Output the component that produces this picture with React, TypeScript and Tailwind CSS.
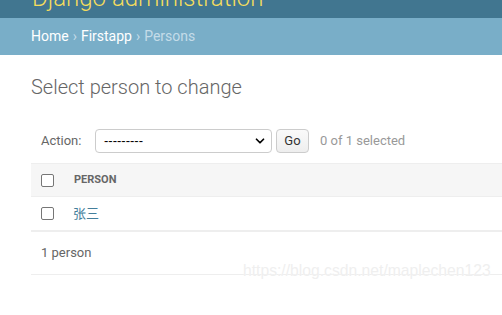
import { ChevronDown } from 'lucide-react';

export default function App() {
  return (
    <div className="relative w-[502px] h-[315px] overflow-hidden bg-white font-['Roboto',sans-serif] text-[#333]">
      <div className="h-[18px] bg-[#417690] overflow-hidden px-[32px]">
        <div className="mt-[-16px] text-[24px] font-light leading-[28px] text-[#f5dd5d]">Django administration</div>
      </div>
      <div className="h-[37px] bg-[#79aec8] flex items-center px-[31px] text-[14px] text-white">
        <span>Home</span>
        <span className="mx-[4px] text-[#c4dce8]">›</span>
        <span>Firstapp</span>
        <span className="mx-[4px] text-[#c4dce8]">›</span>
        <span className="text-[#c4dce8]">Persons</span>
      </div>

      <div className="px-[31px]">
        <h1 className="mt-[20px] text-[20px] font-light leading-[24px] text-[#666]">Select person to change</h1>

        <div className="mt-[30px] flex items-center h-[24px] text-[13px]">
          <span className="ml-[10px] w-[54px] text-[#666]">Action:</span>
          <div className="w-[177px] h-[24px] border border-[#ccc] rounded-[4px] bg-white flex items-center justify-between pl-[8px] pr-[4px]">
            <span className="text-black font-['Liberation_Sans',sans-serif]">---------</span>
            <ChevronDown className="w-[14px] h-[14px] text-black" strokeWidth={3} />
          </div>
          <div className="ml-[4px] w-[33px] h-[24px] border border-[#ccc] rounded-[4px] bg-gradient-to-b from-[#fafafa] to-[#eee] flex items-center justify-center text-[#333]">Go</div>
          <span className="ml-[11px] text-[#999]">0 of 1 selected</span>
        </div>

        <div className="mt-[10px] mr-[-31px]">
          <div className="h-[33px] bg-[#f6f6f6] border-t border-[#eee] flex items-center">
            <div className="ml-[10px] w-[13px] h-[13px] border border-[#767676] rounded-[2px] bg-white" />
            <span className="ml-[20px] text-[11px] font-bold text-[#666] uppercase">Person</span>
          </div>
          <div className="h-[36px] border-t border-[#eee] border-b-2 border-b-[#eee] flex items-center">
            <div className="ml-[10px] w-[13px] h-[13px] border border-[#767676] rounded-[2px] bg-white" />
            <span className="ml-[19px] text-[13px] text-[#447e9b] font-['Roboto','Noto_Sans_CJK_SC',sans-serif]">张三</span>
          </div>
          <div className="h-[43px] border-b border-[#eee] flex items-center">
            <span className="ml-[10px] text-[13px] text-[#666]">1 person</span>
          </div>
        </div>
      </div>

      <div className="absolute left-[243px] top-[259px] text-[15.7px] text-[#efefef] font-['Liberation_Sans',sans-serif] [text-shadow:0_0_1px_#fff]">
        https://blog.csdn.net/maplechen123
      </div>
    </div>
  );
}
